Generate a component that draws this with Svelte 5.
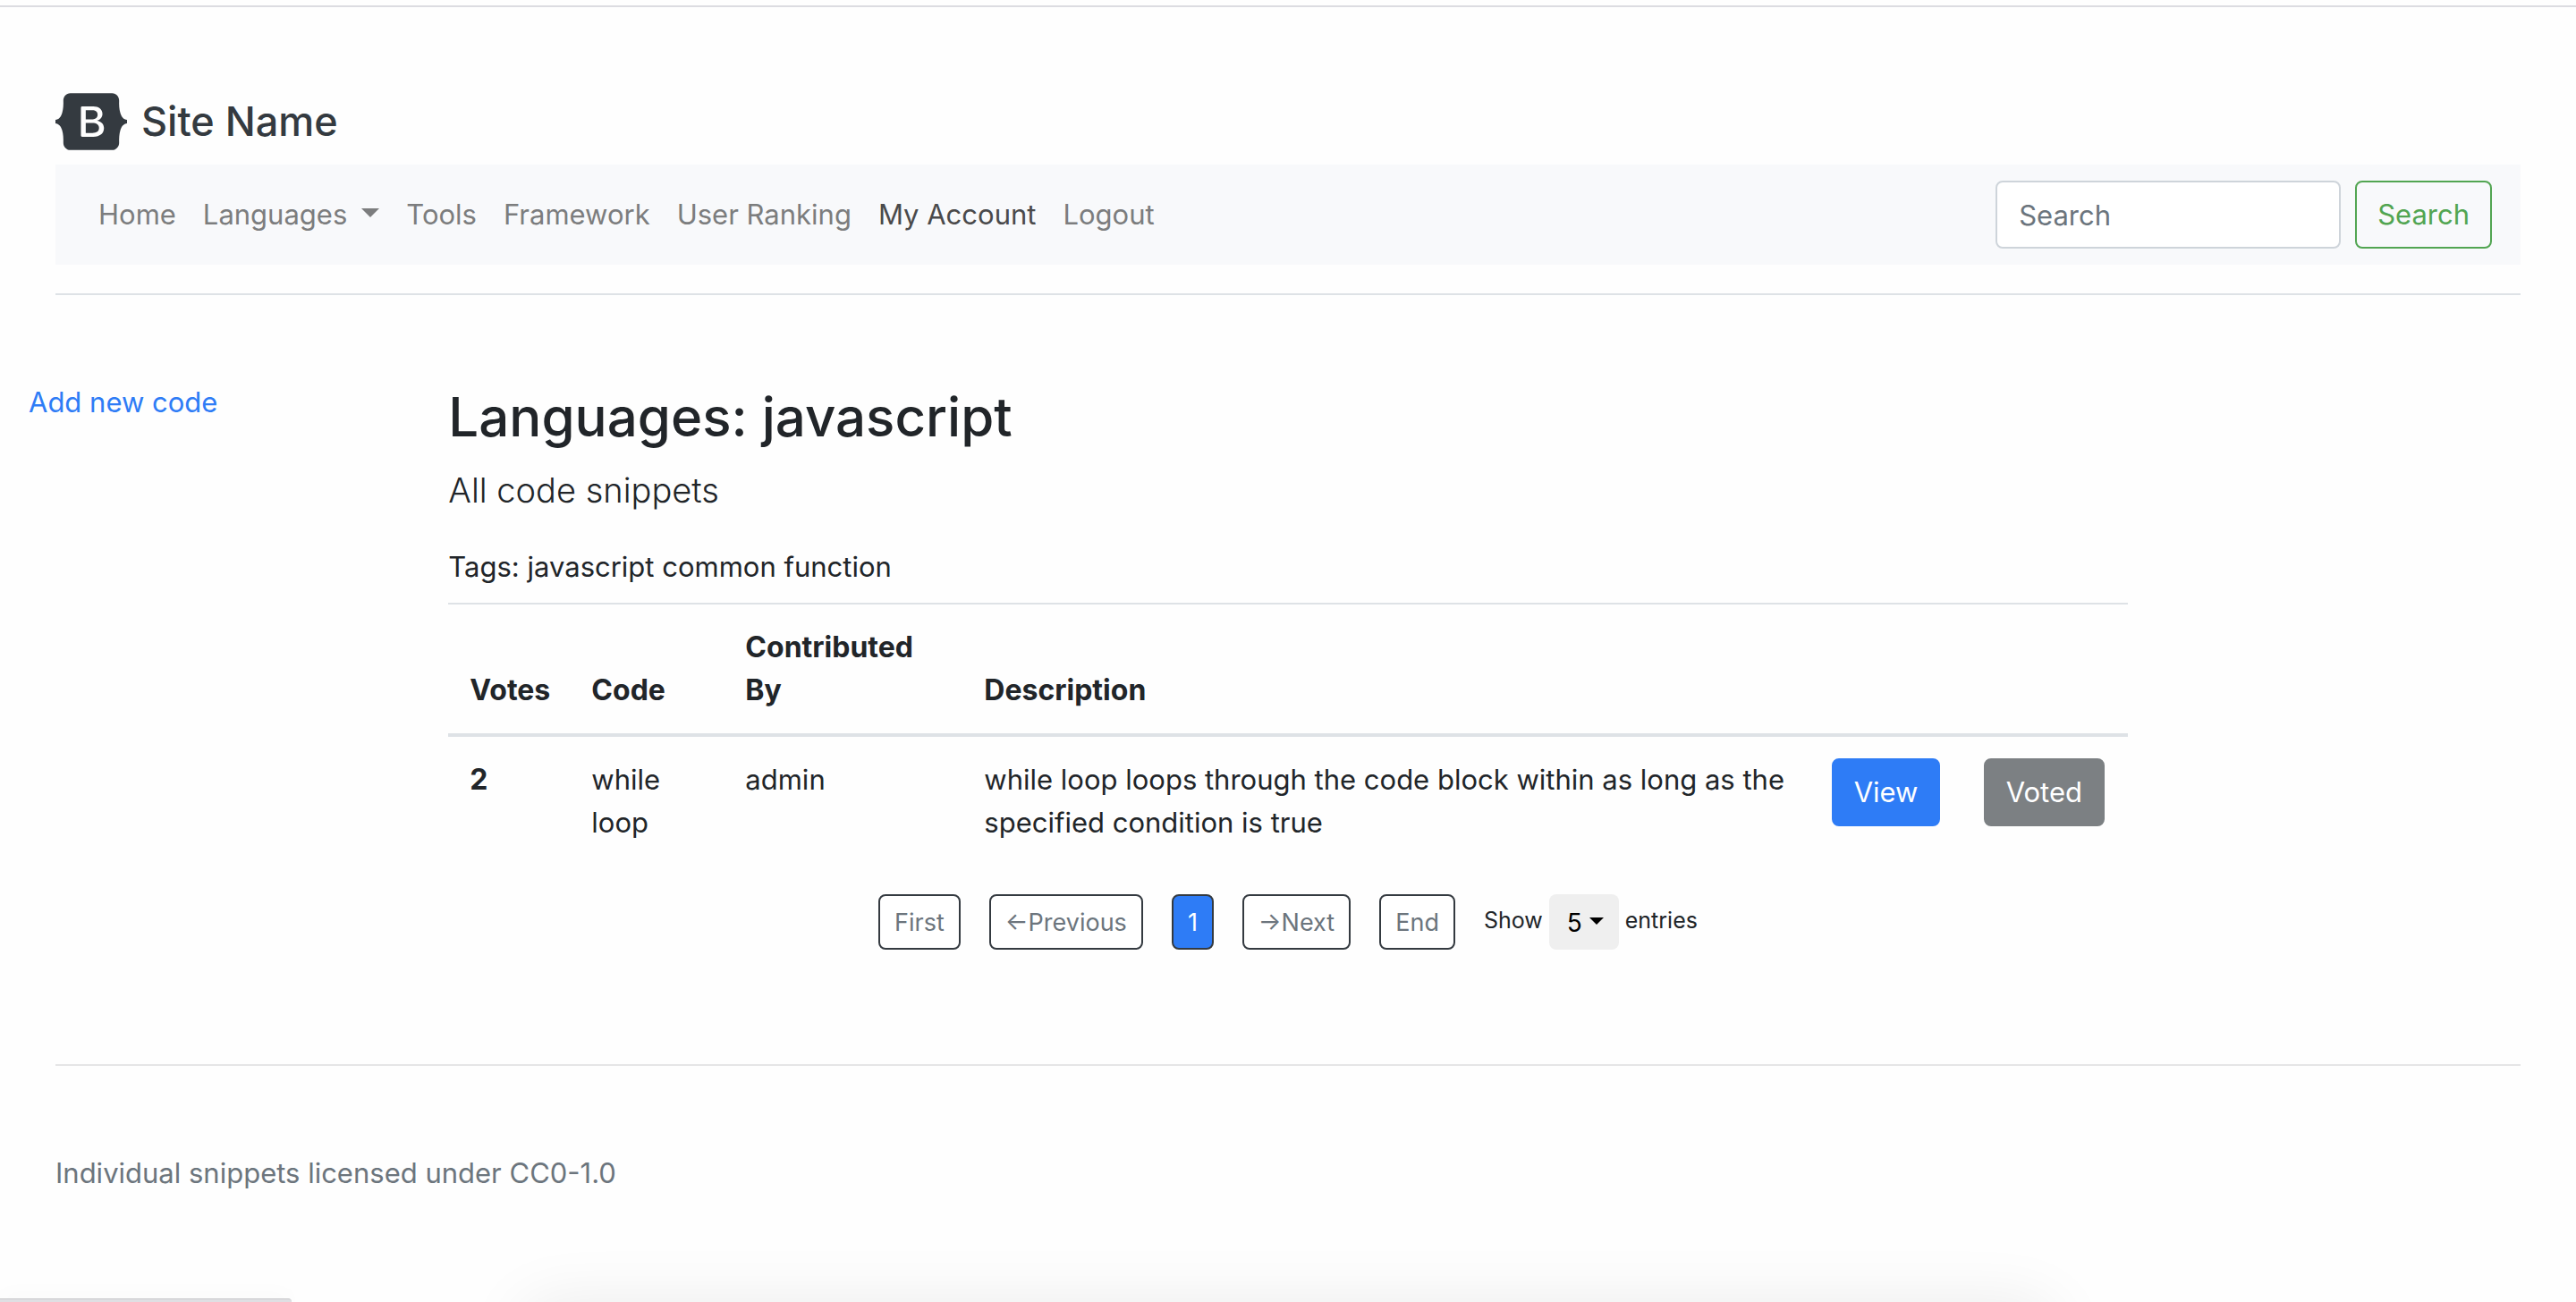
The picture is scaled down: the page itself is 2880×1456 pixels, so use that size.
<script>
  const navItems = [
    { label: 'Home' },
    { label: 'Languages', menu: true },
    { label: 'Tools' },
    { label: 'Framework' },
    { label: 'User Ranking' },
    { label: 'My Account', active: true },
    { label: 'Logout' }
  ];

  const snippets = [
    {
      votes: 2,
      code: 'while loop',
      author: 'admin',
      description:
        'while loop loops through the code block within as long as the specified condition is true'
    }
  ];

  const pageSizes = [5, 10, 15, 20];
  let pageSize = $state(5);
  let query = $state('');
</script>

<div class="page">
  <div class="container">
    <header>
      <a class="brand" href="#home">
        <svg class="logo" viewBox="0 0 118 94" aria-hidden="true">
          <path
            fill="currentColor"
            fill-rule="evenodd"
            clip-rule="evenodd"
            d="M24.509 0c-6.733 0-11.715 5.893-11.492 12.284.214 6.14-.064 14.092-2.066 20.577C8.943 39.365 5.547 43.485 0 44.014v5.972c5.547.529 8.943 4.649 10.951 11.153 2.002 6.485 2.28 14.437 2.066 20.577C12.794 88.106 17.776 94 24.51 94H93.5c6.733 0 11.714-5.893 11.491-12.284-.214-6.14.064-14.092 2.066-20.577 2.009-6.504 5.396-10.624 10.943-11.153v-5.972c-5.547-.529-8.934-4.649-10.943-11.153-2.002-6.484-2.28-14.437-2.066-20.577C105.214 5.894 100.233 0 93.5 0H24.508zM80 57.863C80 66.663 73.436 72 62.543 72H44a2 2 0 01-2-2V24a2 2 0 012-2h18.437c9.083 0 15.044 4.92 15.044 12.474 0 5.302-4.01 10.049-9.119 10.88v.277C75.317 46.394 80 51.21 80 57.863zM60.521 28.34H49.948v14.934h8.905c6.884 0 10.68-2.772 10.68-7.727 0-4.643-3.264-7.207-9.012-7.207zM49.948 49.2v16.458H60.91c7.167 0 10.964-2.876 10.964-8.281 0-5.406-3.903-8.178-11.425-8.178H49.948z"
          />
        </svg>
        <span>Site Name</span>
      </a>

      <nav class="navbar">
        <ul>
          {#each navItems as item}
            <li>
              <a href="#{item.label.toLowerCase().replace(' ', '-')}" class:active={item.active}>
                {item.label}
                {#if item.menu}
                  <svg class="caret" viewBox="0 0 20 10" aria-hidden="true">
                    <path d="M0 0h20L10 10z" fill="currentColor" />
                  </svg>
                {/if}
              </a>
            </li>
          {/each}
        </ul>
        <form onsubmit={(e) => e.preventDefault()}>
          <input type="search" placeholder="Search" aria-label="Search" bind:value={query} />
          <button class="btn outline" type="submit">Search</button>
        </form>
      </nav>
    </header>
  </div>

  <div class="columns">
    <aside><a href="#add">Add new code</a></aside>

    <main>
      <h1>Languages: javascript</h1>
      <p class="lead">All code snippets</p>
      <p class="tags">Tags: javascript common function</p>

      <table>
        <colgroup>
          <col class="c-votes" />
          <col class="c-code" />
          <col class="c-author" />
          <col />
          <col class="c-view" />
          <col class="c-vote" />
        </colgroup>
        <thead>
          <tr>
            <th scope="col">Votes</th>
            <th scope="col">Code</th>
            <th scope="col">Contributed By</th>
            <th scope="col">Description</th>
            <th scope="col" aria-label="View"></th>
            <th scope="col" aria-label="Vote"></th>
          </tr>
        </thead>
        <tbody>
          {#each snippets as s}
            <tr>
              <th scope="row">{s.votes}</th>
              <td>{s.code}</td>
              <td>{s.author}</td>
              <td>{s.description}</td>
              <td><button class="btn primary" type="button">View</button></td>
              <td><button class="btn voted" type="button">Voted</button></td>
            </tr>
          {/each}
        </tbody>
      </table>

      <div class="pager">
        <button type="button">First</button>
        <button type="button">←Previous</button>
        <button type="button" class="current" aria-current="page">1</button>
        <button type="button">→Next</button>
        <button type="button">End</button>
        <div class="entries">
          <label for="page-size">Show</label>
          <span class="select">
            <select id="page-size" bind:value={pageSize}>
              {#each pageSizes as n}
                <option value={n}>{n}</option>
              {/each}
            </select>
            <svg viewBox="0 0 16 8" aria-hidden="true"><path d="M0 0h16L8 8z" /></svg>
          </span>
          <span>entries</span>
        </div>
      </div>
    </main>
  </div>

  <div class="container">
    <footer>Individual snippets licensed under CC0-1.0</footer>
  </div>

  <div class="dock-shadow"></div>
  <div class="status-bubble"></div>
</div>

<style>
  :global(body) {
    margin: 0;
    background: #fefefe;
  }

  .page {
    position: relative;
    box-sizing: border-box;
    min-height: 100vh;
    padding-top: 6px;
    overflow: hidden;
    color: #212529;
    font-family: Inter, 'Liberation Sans', sans-serif;
    font-size: 31px;
    line-height: 48px;
  }

  .page::before {
    content: '';
    display: block;
    height: 2px;
    background: #dcdce1;
  }

  .page :is(button, input, select) {
    font: inherit;
  }

  a {
    color: #2e7cf6;
    text-decoration: none;
  }

  .container {
    padding: 0 62px;
  }

  header {
    padding: 96px 0 32px;
    border-bottom: 2px solid #dee2e6;
  }

  .brand {
    display: flex;
    align-items: center;
    gap: 16px;
    height: 64px;
    margin-bottom: 16px;
    color: #343a40;
    font-size: 45px;
    font-weight: 500;
  }

  .logo {
    width: 80px;
    height: 64px;
  }

  .navbar {
    display: flex;
    align-items: center;
    justify-content: space-between;
    padding: 18px 32px;
    background: #f8f9fb;
  }

  ul {
    display: flex;
    gap: 30px;
    margin: 0;
    padding: 0 0 0 16px;
    list-style: none;
  }

  li a {
    display: flex;
    gap: 16px;
    color: #7c7d7e;
  }

  li a.active {
    color: #4a4a4b;
  }

  .caret {
    width: 20px;
    height: 10px;
    margin-top: 17px;
  }

  form {
    display: flex;
    gap: 16px;
  }

  input {
    box-sizing: border-box;
    width: 386px;
    height: 76px;
    padding: 0 24px;
    border: 2px solid #ced4da;
    border-radius: 8px;
    background: #fff;
    appearance: none;
  }

  input::placeholder {
    color: #6c757d;
    opacity: 1;
  }

  .btn {
    display: block;
    box-sizing: border-box;
    height: 76px;
    padding: 0 23px;
    border: 2px solid transparent;
    border-radius: 8px;
    color: #fff;
    white-space: nowrap;
  }

  .outline {
    border-color: #52a552;
    background: transparent;
    color: #52a552;
  }

  .primary {
    border-color: #2e7cf6;
    background: #2e7cf6;
  }

  .voted {
    border-color: #7c8083;
    background: #7c8083;
  }

  .columns {
    display: grid;
    grid-template-columns: 1fr 4fr 1fr;
    padding: 96px 32px 128px;
  }

  h1 {
    margin: 0 0 12px;
    font-size: 60px;
    font-weight: 500;
    line-height: 80px;
  }

  .lead {
    margin: 0 0 32px;
    font-size: 38px;
    font-weight: 300;
    line-height: 60px;
  }

  .tags {
    margin: 0 0 16px;
  }

  table {
    width: 100%;
    margin-bottom: 32px;
    border-collapse: separate;
    border-spacing: 0;
    border-top: 2px solid #dee2e6;
    table-layout: fixed;
  }

  .c-votes { width: 136px; }
  .c-code { width: 172px; }
  .c-author { width: 267px; }
  .c-view { width: 170px; }
  .c-vote { width: 185px; }

  th,
  td {
    padding: 24px;
    text-align: left;
    vertical-align: top;
  }

  th {
    font-size: 32px;
    font-weight: 700;
  }

  thead th {
    border-bottom: 4px solid #dee2e6;
    vertical-align: bottom;
  }

  .pager {
    display: flex;
    justify-content: center;
    gap: 32px;
    font-size: 27px;
  }

  .pager > button {
    box-sizing: border-box;
    height: 62px;
    padding: 2px 16px 0;
    border: 2px solid #343a40;
    border-radius: 8px;
    background: #fff;
    color: #6c757d;
  }

  .pager > .current {
    background: #2e7cf6;
    color: #fff;
  }

  .entries {
    display: flex;
    align-items: flex-start;
    gap: 7px;
    font-size: 25px;
    line-height: 58px;
  }

  .select {
    position: relative;
    font-size: 28px;
  }

  select {
    display: block;
    width: 78px;
    height: 62px;
    padding: 2px 20px 0;
    border: 0;
    border-radius: 8px;
    background: #efefef;
    color: #000;
    appearance: none;
  }

  .select svg {
    position: absolute;
    top: 26px;
    right: 17px;
    width: 16px;
    height: 8px;
    pointer-events: none;
  }

  footer {
    padding: 96px 0;
    border-top: 2px solid #e5e5e6;
    color: #6c757d;
  }

  .status-bubble,
  .dock-shadow {
    position: absolute;
    pointer-events: none;
  }

  .status-bubble {
    bottom: 0;
    left: 0;
    box-sizing: border-box;
    width: 326px;
    height: 4px;
    border-top: 1px solid #c6c6c8;
    border-top-right-radius: 4px;
    background: #dfdfe3;
    box-shadow: 0 0 24px rgb(0 0 0 / 8%);
  }

  .dock-shadow {
    right: 600px;
    bottom: -60px;
    left: 600px;
    height: 40px;
    border-radius: 20px;
    box-shadow: 0 0 70px 20px rgb(0 0 0 / 8%);
  }
</style>
